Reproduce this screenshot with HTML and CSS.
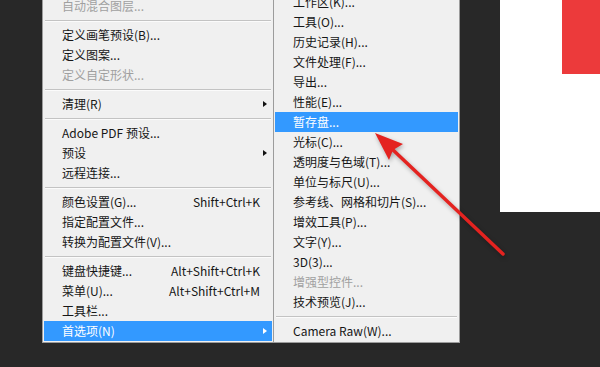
FILE: index.html
```html
<!DOCTYPE html>
<html lang="zh-CN">
<head>
  <meta charset="UTF-8" />
  <meta name="viewport" content="width=device-width, initial-scale=1.0"/>
  <title>首选项菜单</title>
  <link rel="stylesheet" href="styles.css">
</head>
<body>
  <div class="workspace">
    <ul class="menu main-menu">
      <li class="item disabled"><span class="label">自动混合图层...</span></li>
      <li class="sep"></li>
      <li class="item"><span class="label">定义画笔预设(B)...</span></li>
      <li class="item"><span class="label">定义图案...</span></li>
      <li class="item disabled"><span class="label">定义自定形状...</span></li>
      <li class="sep"></li>
      <li class="item"><span class="label">清理(R)</span><span class="more"></span></li>
      <li class="sep"></li>
      <li class="item"><span class="label">Adobe PDF 预设...</span></li>
      <li class="item"><span class="label">预设</span><span class="more"></span></li>
      <li class="item"><span class="label">远程连接...</span></li>
      <li class="sep"></li>
      <li class="item"><span class="label">颜色设置(G)...</span><span class="keys">Shift+Ctrl+K</span></li>
      <li class="item"><span class="label">指定配置文件...</span></li>
      <li class="item"><span class="label">转换为配置文件(V)...</span></li>
      <li class="sep"></li>
      <li class="item"><span class="label">键盘快捷键...</span><span class="keys">Alt+Shift+Ctrl+K</span></li>
      <li class="item"><span class="label">菜单(U)...</span><span class="keys">Alt+Shift+Ctrl+M</span></li>
      <li class="item"><span class="label">工具栏...</span></li>
      <li class="item active"><span class="label">首选项(N)</span><span class="more"></span></li>
    </ul>

    <ul class="menu sub-menu">
      <li class="item"><span class="label">工作区(K)...</span></li>
      <li class="item"><span class="label">工具(O)...</span></li>
      <li class="item"><span class="label">历史记录(H)...</span></li>
      <li class="item"><span class="label">文件处理(F)...</span></li>
      <li class="item"><span class="label">导出...</span></li>
      <li class="item"><span class="label">性能(E)...</span></li>
      <li class="item active"><span class="label">暂存盘...</span></li>
      <li class="item"><span class="label">光标(C)...</span></li>
      <li class="item"><span class="label">透明度与色域(T)...</span></li>
      <li class="item"><span class="label">单位与标尺(U)...</span></li>
      <li class="item"><span class="label">参考线、网格和切片(S)...</span></li>
      <li class="item"><span class="label">增效工具(P)...</span></li>
      <li class="item"><span class="label">文字(Y)...</span></li>
      <li class="item"><span class="label">3D(3)...</span></li>
      <li class="item disabled"><span class="label">增强型控件...</span></li>
      <li class="item"><span class="label">技术预览(J)...</span></li>
      <li class="sep"></li>
      <li class="item"><span class="label">Camera Raw(W)...</span></li>
    </ul>

    <div class="canvas">
      <div class="swatch"></div>
    </div>
  </div>

  <!-- red callout arrow pointing at the highlighted entry -->
  <svg class="callout" width="600" height="367" viewBox="0 0 600 367">
    <line x1="503" y1="254" x2="392" y2="149" stroke="#e42320" stroke-width="3.5" stroke-linecap="round"/>
    <polygon points="375,133 403,144 393,150 389,160" fill="#e42320"/>
  </svg>
</body>
</html>
```

FILE: styles.css
```css
* {
  box-sizing: border-box;
}

body {
  margin: 0;
  width: 600px;
  height: 367px;
  overflow: hidden;
  background: #282828;
  font-family: "Noto Sans CJK SC", "Noto Sans", sans-serif;
  font-size: 12px;
  position: relative;
}

.workspace {
  display: flex;
  align-items: flex-start;
  padding-left: 42px;
}

.menu {
  list-style: none;
  margin: 0;
  padding: 1px;
  background: #f0f0f0;
  border: 1px solid #9c9c9c;
  color: #161616;
}

.main-menu {
  width: 232px;
  margin-top: -6px;
}

.sub-menu {
  width: 187px;
  margin-top: -10px;
  margin-left: -1px;
}

.item {
  display: flex;
  align-items: center;
  height: 20px;
  line-height: 20px;
  padding: 0 4px 0 18px;
  white-space: nowrap;
}

.item .label {
  flex: 1;
}

.item .keys {
  margin-right: 8px;
}

.item.disabled {
  color: #a0a0a0;
}

.item.active {
  background: #3399ff;
  color: #ffffff;
}

.more {
  width: 0;
  height: 0;
  margin-right: 1px;
  border-left: 4px solid #111;
  border-top: 3.5px solid transparent;
  border-bottom: 3.5px solid transparent;
}

.item.active .more {
  border-left-color: #ffffff;
}

.sep {
  height: 0;
  margin: 4px 1px 3px;
  border-top: 1px solid #c3c3c3;
  border-bottom: 1px solid #fbfbfb;
  box-sizing: content-box;
}

.canvas {
  margin-left: 40px;
  flex: 1;
  height: 212px;
  background: #ffffff;
  display: flex;
  justify-content: flex-end;
}

.swatch {
  width: 38px;
  height: 74px;
  background: #ec3a3b;
}

.callout {
  position: absolute;
  left: 0;
  top: 0;
  pointer-events: none;
  filter: drop-shadow(1px 2px 2px rgba(0, 0, 0, 0.3));
}
```
